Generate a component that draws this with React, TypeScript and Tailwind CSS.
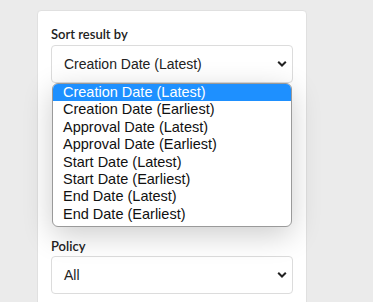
import React from "react";

const options = [
  "Creation Date (Latest)",
  "Creation Date (Earliest)",
  "Approval Date (Latest)",
  "Approval Date (Earliest)",
  "Start Date (Latest)",
  "Start Date (Earliest)",
  "End Date (Latest)",
  "End Date (Earliest)",
];

const Chevron = () => (
  <svg width="10" height="7" viewBox="0 0 10 7" className="absolute right-[5px] top-1/2 -translate-y-1/2">
    <path d="M1.2 1.2 L5 5 L8.8 1.2" fill="none" stroke="#222" strokeWidth="2" />
  </svg>
);

const Select = ({ value }: { value: string }) => (
  <div className="relative h-[38px] w-[242px] rounded-[4px] border border-[#dcdcdc] bg-white pl-[12px] flex items-center text-[14px] text-[#222] font-['Liberation_Sans',Arial,sans-serif]">
    {value}
    <Chevron />
  </div>
);

export default function App() {
  return (
    <div className="h-[302px] w-[373px] overflow-hidden bg-[#ebebeb] pt-[10px] pl-[37px]">
      <div className="relative h-[320px] w-[270px] rounded-[4px] border border-[#e0e0e0] bg-white pl-[13px] pt-[14px] font-['Lato',sans-serif]">
        <div className="text-[13px] font-semibold leading-[18px] text-[#222] mb-[2px]">Sort result by</div>
        <Select value="Creation Date (Latest)" />
        <div className="mt-[154px] text-[13px] font-semibold leading-[18px] text-[#222] mb-[1px]">Policy</div>
        <Select value="All" />

        <div className="absolute left-[14px] top-[72px] w-[240px] overflow-hidden rounded-[6px] border border-[#9a9a9a] bg-white pb-[3px] shadow-[0_8px_30px_rgba(0,0,0,0.2)] font-['Liberation_Sans',Arial,sans-serif] text-[14.5px] text-[#111]">
          {options.map((o, i) => (
            <div
              key={o}
              className={`h-[17.4px] leading-[17px] pl-[10px] ${i === 0 ? "bg-[#1e90ff] text-white" : ""}`}
            >
              {o}
            </div>
          ))}
        </div>
      </div>
    </div>
  );
}
